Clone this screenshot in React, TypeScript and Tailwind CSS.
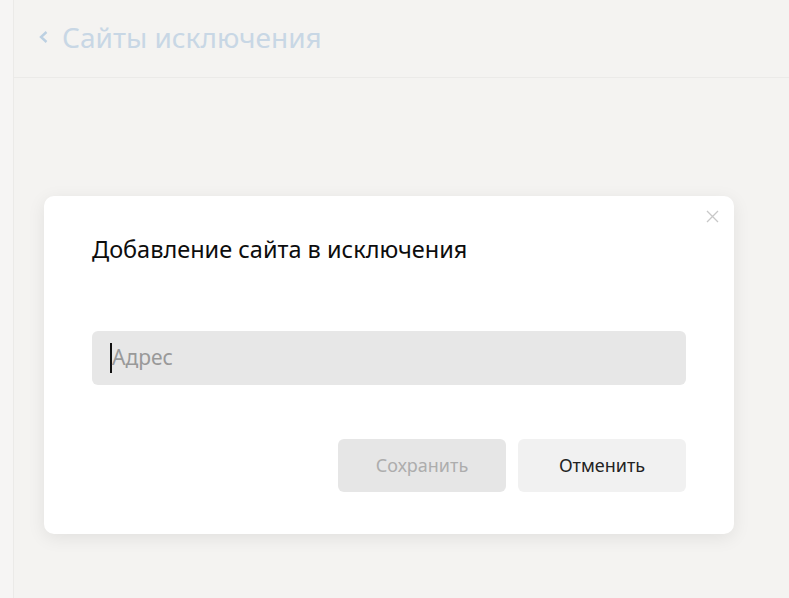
export default function App() {
  return (
    <div
      className="flex h-[598px] w-[789px] overflow-hidden bg-[#f4f3f1]"
      style={{ fontFamily: '"Noto Sans", "Open Sans", sans-serif' }}
    >
      <div className="w-[14px] shrink-0 border-r border-[#ebeae8] bg-[#f6f5f4]" />
      <div className="flex flex-1 flex-col">
        <div className="flex h-[78px] items-center gap-[11px] border-b border-[#ebeae8] pb-[4px] pl-[23px]">
          <svg width="14" height="16" viewBox="0 0 14 16" className="text-[#bcd0e2]">
            <path d="M9.5 3 L4 8 L9.5 13" fill="none" stroke="currentColor" strokeWidth="2.4" />
          </svg>
          <h1 className="text-[28px] leading-none text-[#c8d7e5]">Сайты исключения</h1>
        </div>
        <div className="flex flex-1 pl-[30px] pt-[118px]">
          <div className="relative flex h-[338px] w-[690px] flex-col rounded-[10px] bg-white px-[48px] pt-[38px] shadow-[0_4px_18px_rgba(0,0,0,0.08)]">
            <button className="absolute right-[15px] top-[14px] text-[#c8c8c8]">
              <svg width="13" height="13" viewBox="0 0 13 13">
                <path d="M1 1 L12 12 M12 1 L1 12" stroke="currentColor" strokeWidth="1.3" />
              </svg>
            </button>
            <h2 className="text-[23.5px] leading-[30px] text-[#0d0d0d]">
              Добавление сайта в исключения
            </h2>
            <div className="mt-[67px] flex h-[54px] items-center rounded-[6px] bg-[#e7e7e7] pl-[18px]">
              <span className="h-[30px] w-[2px] bg-[#111]" />
              <span className="text-[21px] text-[#999]">Адрес</span>
            </div>
            <div className="mt-[54px] flex justify-end gap-[12px]">
              <button className="h-[53px] w-[168px] rounded-[6px] bg-[#e6e6e6] text-[18px] text-[#adadad]">
                Сохранить
              </button>
              <button className="h-[53px] w-[168px] rounded-[6px] bg-[#f1f1f1] text-[18px] text-[#222]">
                Отменить
              </button>
            </div>
          </div>
        </div>
      </div>
    </div>
  );
}
